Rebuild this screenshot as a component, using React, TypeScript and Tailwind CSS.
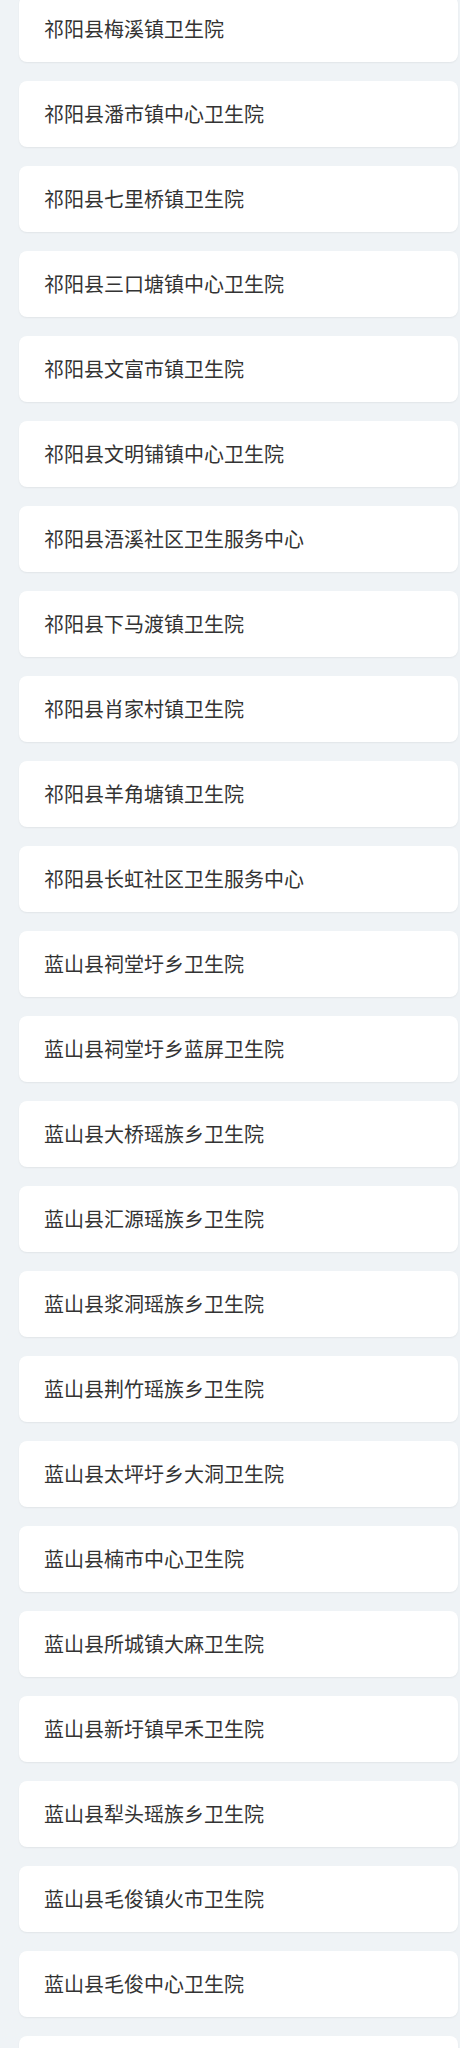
import React from 'react';

const hospitals = [
  '祁阳县梅溪镇卫生院',
  '祁阳县潘市镇中心卫生院',
  '祁阳县七里桥镇卫生院',
  '祁阳县三口塘镇中心卫生院',
  '祁阳县文富市镇卫生院',
  '祁阳县文明铺镇中心卫生院',
  '祁阳县浯溪社区卫生服务中心',
  '祁阳县下马渡镇卫生院',
  '祁阳县肖家村镇卫生院',
  '祁阳县羊角塘镇卫生院',
  '祁阳县长虹社区卫生服务中心',
  '蓝山县祠堂圩乡卫生院',
  '蓝山县祠堂圩乡蓝屏卫生院',
  '蓝山县大桥瑶族乡卫生院',
  '蓝山县汇源瑶族乡卫生院',
  '蓝山县浆洞瑶族乡卫生院',
  '蓝山县荆竹瑶族乡卫生院',
  '蓝山县太坪圩乡大洞卫生院',
  '蓝山县楠市中心卫生院',
  '蓝山县所城镇大麻卫生院',
  '蓝山县新圩镇早禾卫生院',
  '蓝山县犁头瑶族乡卫生院',
  '蓝山县毛俊镇火市卫生院',
  '蓝山县毛俊中心卫生院',
];

function HospitalCard({ name }: { name?: string }) {
  return (
    <div className="flex h-[66px] shrink-0 items-center rounded-lg bg-white pl-[25px] shadow-[0_1px_2px_rgba(0,0,0,0.06)]">
      {name && <span className="text-[20px] leading-none text-[#333333]">{name}</span>}
    </div>
  );
}

export default function App() {
  return (
    <div
      className="h-[2048px] overflow-hidden bg-[#eff3f6] pl-[19px] pr-[2px]"
      style={{ fontFamily: '"Noto Sans CJK SC", "Noto Sans", sans-serif' }}
    >
      <div className="-mt-[4px] flex flex-col gap-[19px]">
        {hospitals.map((h) => (
          <HospitalCard key={h} name={h} />
        ))}
        {/* next row, only its top edge shows */}
        <HospitalCard />
      </div>
    </div>
  );
}
